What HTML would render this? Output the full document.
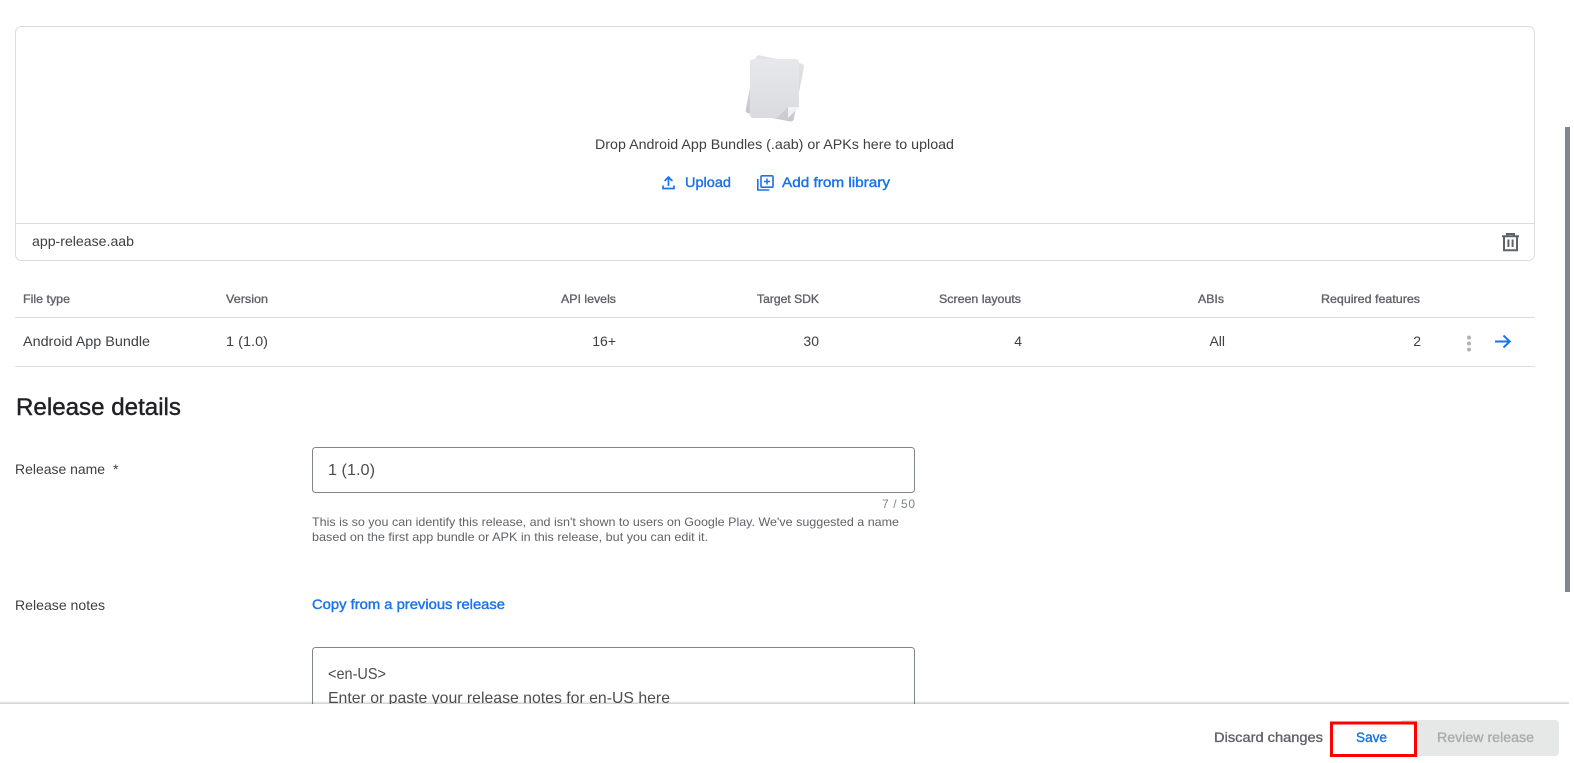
<!DOCTYPE html>
<html lang="en">
<head>
<meta charset="utf-8">
<title>Release details</title>
<style>
html,body{margin:0;padding:0;width:1574px;height:763px;overflow:hidden;background:#fff}
svg{display:block;position:absolute;left:0;top:0}
text{font-family:"Liberation Sans",sans-serif;font-size:14px;fill:#3c4043}
.h{font-size:12px;fill:#5f6368;stroke:#5f6368;stroke-width:.35}
.b{fill:#1a73e8;stroke:#1a73e8;stroke-width:.4;font-size:14px}
.i{font-size:16px;fill:#4b4e52}
.s{font-size:12px;fill:#5f6368}
</style>
</head>
<body>
<svg width="1574" height="763" viewBox="0 0 1574 763" xmlns="http://www.w3.org/2000/svg">
<defs>
<linearGradient id="f" x1="0" y1="0" x2="0" y2="1"><stop offset="0" stop-color="#e7e8eb"/><stop offset="1" stop-color="#dadbde"/></linearGradient>
<linearGradient id="k" x1="0" y1="0" x2="0" y2="1"><stop offset="0" stop-color="#e2e3e6"/><stop offset="1" stop-color="#c6c8cb"/></linearGradient>
<linearGradient id="sh" x1="0" y1="0" x2="0" y2="1"><stop offset="0" stop-color="#000" stop-opacity="0"/><stop offset="1" stop-color="#000" stop-opacity=".2"/></linearGradient>
<filter id="soft" x="-10%" y="-10%" width="120%" height="120%"><feGaussianBlur stdDeviation=".35"/></filter>
</defs>

<!-- upload card -->
<rect x="15.5" y="26.5" width="1519" height="234" rx="6" fill="#fff" stroke="#dadce0"/>
<rect x="16" y="223" width="1518" height="1" fill="#dadce0"/>

<!-- sheets -->
<g filter="url(#soft)">
<rect x="750" y="59" width="49" height="59" rx="3" fill="url(#k)" transform="rotate(11 775 90)"/>
<path d="M753 59h43a3 3 0 0 1 3 3v45l-11 11h-35a3 3 0 0 1-3-3V62a3 3 0 0 1 3-3z" fill="url(#f)"/>
<path d="M777 118l11-11v14z" fill="#cbcdd0"/>
<path d="M799 107h-11v11z" fill="#f1f2f3"/>
</g>

<text x="595" y="149" textLength="359" lengthAdjust="spacingAndGlyphs">Drop Android App Bundles (.aab) or APKs here to upload</text>

<!-- upload icon -->
<path d="M668.5 186v-8.5M664.6 181l3.9-3.9 3.9 3.9M663 185.5v3h11v-3" fill="none" stroke="#1a73e8" stroke-width="1.7"/>
<text class="b" x="685" y="187" textLength="46" lengthAdjust="spacingAndGlyphs">Upload</text>
<!-- library icon -->
<rect x="761" y="175.8" width="12" height="11.4" rx="1" fill="none" stroke="#1a73e8" stroke-width="1.6"/>
<path d="M757.8 179v11h11.5" fill="none" stroke="#1a73e8" stroke-width="1.6"/>
<path d="M767 178.5v6M764 181.5h6" fill="none" stroke="#1a73e8" stroke-width="1.5"/>
<text class="b" x="782" y="187" textLength="108" lengthAdjust="spacingAndGlyphs">Add from library</text>

<text x="32" y="246" textLength="102" lengthAdjust="spacingAndGlyphs">app-release.aab</text>
<!-- trash -->
<path d="M1502 236.3h17M1507 236v-2h7v2M1504 236.5v13.7h13v-13.7M1508.4 239.5v7.5M1512.6 239.5v7.5" fill="none" stroke="#5f6368" stroke-width="2"/>

<!-- table -->
<text class="h" x="23" y="303" textLength="47" lengthAdjust="spacingAndGlyphs">File type</text>
<text class="h" x="226" y="303" textLength="42" lengthAdjust="spacingAndGlyphs">Version</text>
<text class="h" x="561" y="303" textLength="55" lengthAdjust="spacingAndGlyphs">API levels</text>
<text class="h" x="757" y="303" textLength="62" lengthAdjust="spacingAndGlyphs">Target SDK</text>
<text class="h" x="939" y="303" textLength="82" lengthAdjust="spacingAndGlyphs">Screen layouts</text>
<text class="h" x="1198" y="303" textLength="26" lengthAdjust="spacingAndGlyphs">ABIs</text>
<text class="h" x="1321" y="303" textLength="99" lengthAdjust="spacingAndGlyphs">Required features</text>
<rect x="15" y="317" width="1520" height="1" fill="#dadce0"/>
<text x="23" y="346" textLength="127" lengthAdjust="spacingAndGlyphs">Android App Bundle</text>
<text x="226" y="346" textLength="42" lengthAdjust="spacingAndGlyphs">1 (1.0)</text>
<text x="616" y="346" text-anchor="end">16+</text>
<text x="819" y="346" text-anchor="end">30</text>
<text x="1022" y="346" text-anchor="end">4</text>
<text x="1225" y="346" text-anchor="end">All</text>
<text x="1421" y="346" text-anchor="end">2</text>
<circle cx="1469" cy="337.5" r="2" fill="#b0b2b5"/><circle cx="1469" cy="343.5" r="2" fill="#b0b2b5"/><circle cx="1469" cy="349.5" r="2" fill="#b0b2b5"/>
<path d="M1495 341.5h15M1503.5 335.5l6.3 6-6.3 6" fill="none" stroke="#1a73e8" stroke-width="1.9"/>
<rect x="15" y="366" width="1520" height="1" fill="#dadce0"/>

<!-- details -->
<text x="16" y="415" textLength="165" lengthAdjust="spacingAndGlyphs" style="font-size:24px;fill:#202124;stroke:#202124;stroke-width:.4">Release details</text>
<text x="15" y="474" textLength="90" lengthAdjust="spacingAndGlyphs">Release name</text>
<text x="113" y="474">*</text>
<rect x="312.5" y="447.5" width="602" height="45" rx="3" fill="#fff" stroke="#80868b"/>
<text class="i" x="328" y="475" textLength="47" lengthAdjust="spacingAndGlyphs">1 (1.0)</text>
<text class="s" x="882" y="508" textLength="33" style="fill:#80868b">7 / 50</text>
<text class="s" x="312" y="526" textLength="587" lengthAdjust="spacingAndGlyphs">This is so you can identify this release, and isn't shown to users on Google Play. We've suggested a name</text>
<text class="s" x="312" y="541" textLength="396" lengthAdjust="spacingAndGlyphs">based on the first app bundle or APK in this release, but you can edit it.</text>
<text x="15" y="610" textLength="90" lengthAdjust="spacingAndGlyphs">Release notes</text>
<text class="b" x="312" y="609" textLength="193" lengthAdjust="spacingAndGlyphs">Copy from a previous release</text>
<rect x="312.5" y="647.5" width="602" height="90" rx="3" fill="#fff" stroke="#80868b"/>
<text class="i" x="328" y="679" textLength="58" lengthAdjust="spacingAndGlyphs">&lt;en-US&gt;</text>
<text class="i" x="328" y="703" textLength="342" lengthAdjust="spacingAndGlyphs">Enter or paste your release notes for en-US here</text>

<!-- scrollbar -->
<rect x="1565" y="127" width="5" height="465" fill="#80868b"/>

<!-- footer -->
<rect x="0" y="701" width="1569" height="3" fill="url(#sh)"/>
<rect x="0" y="704" width="1574" height="59" fill="#fff"/>
<text x="1214" y="742" textLength="109" lengthAdjust="spacingAndGlyphs" style="font-size:14px;fill:#5f6368;stroke:#5f6368;stroke-width:.35">Discard changes</text>
<rect x="1400" y="720" width="159" height="36" rx="4" fill="#e6e7e7"/>
<rect x="1331.5" y="723" width="84" height="32.5" fill="#fff" stroke="#ff0000" stroke-width="3"/>
<text class="b" x="1356" y="742" textLength="31" lengthAdjust="spacingAndGlyphs">Save</text>
<text x="1437" y="742" textLength="97" lengthAdjust="spacingAndGlyphs" style="font-size:14px;fill:#a9abab;stroke:#a9abab;stroke-width:.35">Review release</text>
</svg>
</body>
</html>
